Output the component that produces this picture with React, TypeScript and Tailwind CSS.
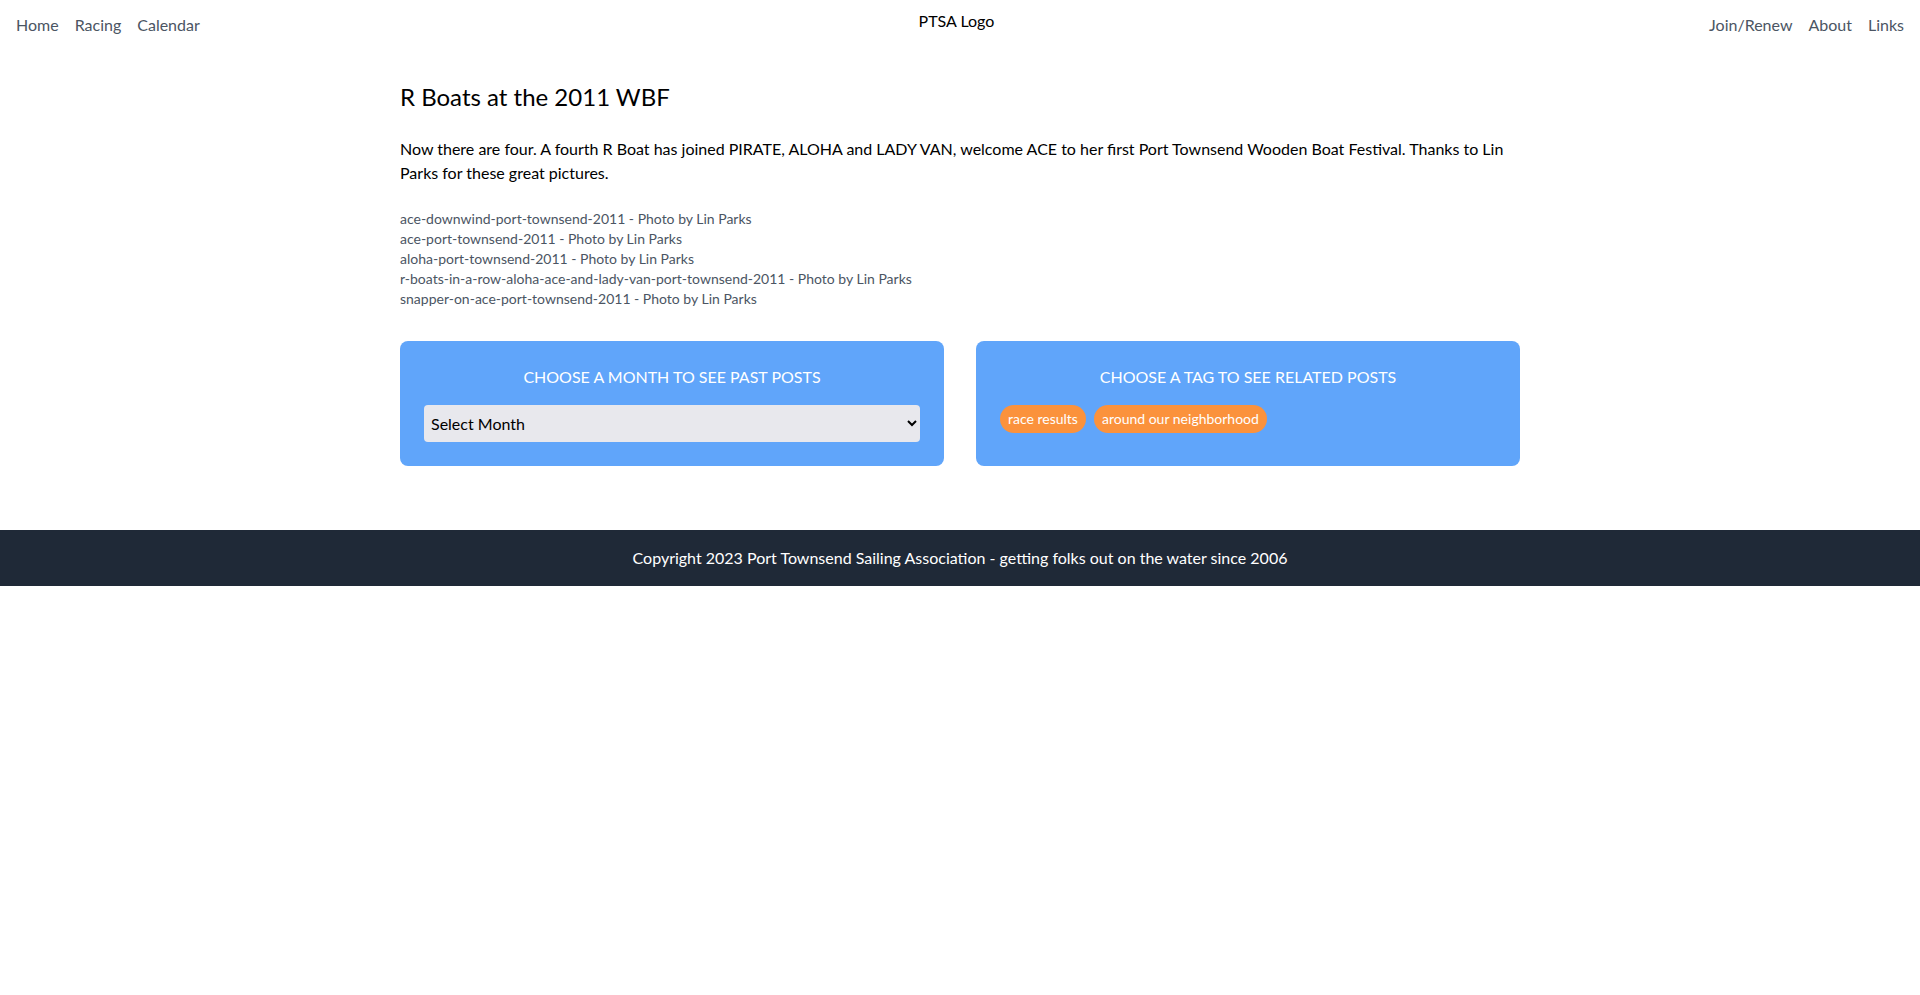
import React from "react";

const captions = [
  "ace-downwind-port-townsend-2011 - Photo by Lin Parks",
  "ace-port-townsend-2011 - Photo by Lin Parks",
  "aloha-port-townsend-2011 - Photo by Lin Parks",
  "r-boats-in-a-row-aloha-ace-and-lady-van-port-townsend-2011 - Photo by Lin Parks",
  "snapper-on-ace-port-townsend-2011 - Photo by Lin Parks",
];

const footerText = "Copyright 2023 Port Townsend Sailing Association - getting folks out on the water since 2006";

export default function App() {
  return (
    <div className="bg-white text-black font-['Lato',sans-serif]">
      <header className="flex justify-between items-start px-4">
        <nav className="flex gap-4 pt-[13px] text-base text-[#4b5563]">
          <a>Home</a>
          <a>Racing</a>
          <a>Calendar</a>
        </nav>
        <div className="pt-[9px] ml-[4px] text-base">PTSA Logo</div>
        <nav className="flex gap-4 pt-[13px] text-base text-[#4b5563]">
          <a>Join/Renew</a>
          <a>About</a>
          <a>Links</a>
        </nav>
      </header>
      <main className="max-w-6xl mx-auto px-4 pt-[44px] pb-16">
        <h1 className="text-2xl">R Boats at the 2011 WBF</h1>
        <p className="mt-6 text-base">
          Now there are four. A fourth R Boat has joined PIRATE, ALOHA and LADY VAN, welcome ACE to her first Port Townsend Wooden Boat Festival. Thanks to Lin Parks for these great pictures.
        </p>
        <div className="mt-6 text-sm text-[#4b5563]">
          {captions.map((c) => (
            <div key={c}>{c}</div>
          ))}
        </div>
        <div className="mt-8 grid grid-cols-2 gap-8">
          <div className="bg-[#60a5fa] rounded-lg p-6">
            <h2 className="text-center text-white uppercase">Choose a month to see past posts</h2>
            <select className="mt-4 w-full h-[37px] rounded bg-[#e8e8ed] pl-[3px] pr-1 text-base text-black">
              <option>Select Month</option>
            </select>
          </div>
          <div className="bg-[#60a5fa] rounded-lg p-6">
            <h2 className="text-center text-white uppercase">Choose a tag to see related posts</h2>
            <div className="mt-4 flex gap-2">
              <span className="bg-[#fb923c] text-white text-sm rounded-full px-2 py-1">race results</span>
              <span className="bg-[#fb923c] text-white text-sm rounded-full px-2 py-1">around our neighborhood</span>
            </div>
          </div>
        </div>
      </main>
      <footer className="bg-[#1f2937] text-white text-center py-4">{footerText}</footer>
    </div>
  );
}
